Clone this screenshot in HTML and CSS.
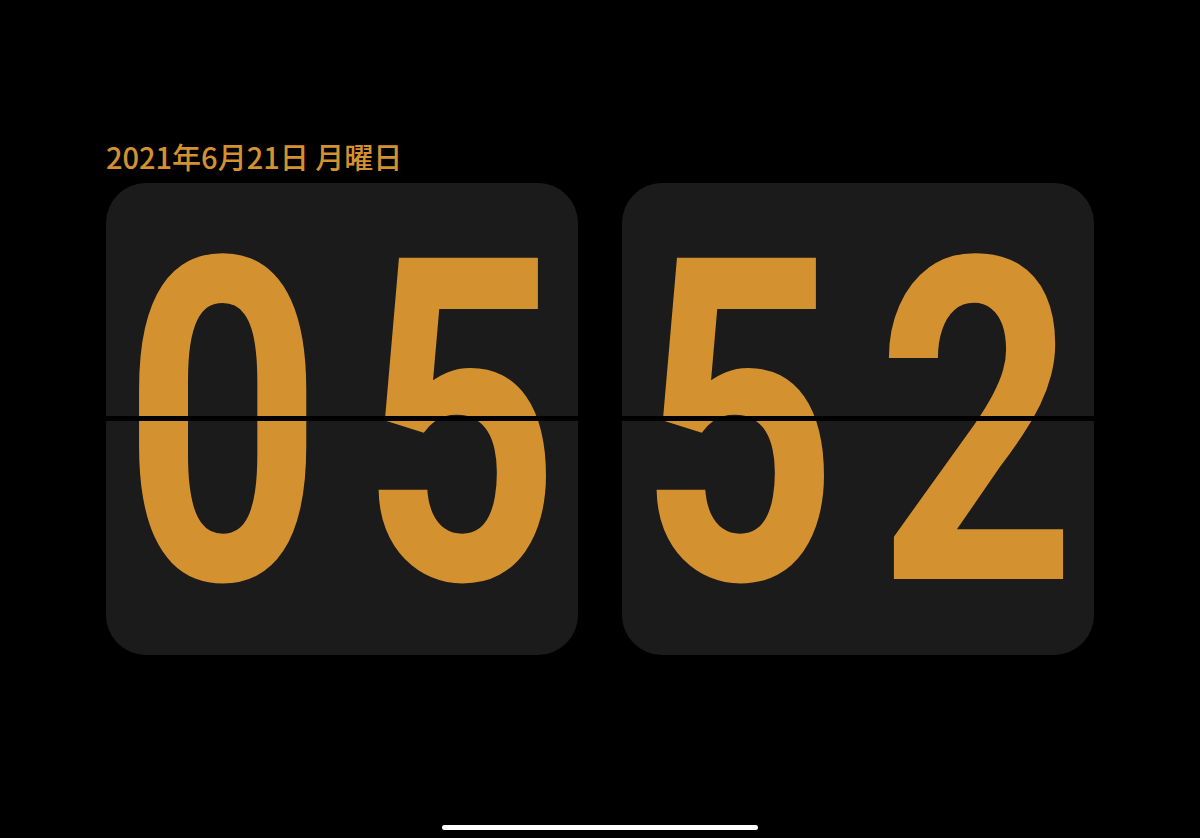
FILE: index.html
```html
<!DOCTYPE html>
<html lang="ja">
<head>
<meta charset="utf-8">
<title>Flip Clock</title>
<link rel="stylesheet" href="styles.css">
</head>
<body>
<main class="screen">
  <section class="clock">
    <div class="date">2021年6月21日 月曜日</div>
    <div class="cards">
      <div class="card">
        <div class="digit"><span>0</span></div>
        <div class="digit"><span>5</span></div>
      </div>
      <div class="card">
        <div class="digit"><span>5</span></div>
        <div class="digit"><span>2</span></div>
      </div>
    </div>
  </section>
  <div class="home-indicator"></div>
</main>
</body>
</html>
```
FILE: styles.css
```css
html, body {
  margin: 0;
  padding: 0;
  background: #000;
}

.screen {
  width: 1200px;
  height: 838px;
  display: flex;
  flex-direction: column;
  align-items: center;
  overflow: hidden;
}

.clock {
  padding-top: 138px;
  width: 988px;
  display: flex;
  flex-direction: column;
}

.date {
  font-family: "Noto Sans CJK JP", "Noto Sans", sans-serif;
  font-weight: 500;
  font-size: 29px;
  line-height: 36px;
  color: #d4912f;
  margin-bottom: 9px;
}

.cards {
  display: flex;
  gap: 44px;
}

.card {
  position: relative;
  width: 472px;
  height: 472px;
  border-radius: 40px;
  background: #1b1b1b;
  display: flex;
  justify-content: center;
  align-items: center;
  gap: 62px;
}

.card::after {
  content: "";
  position: absolute;
  left: 0;
  right: 0;
  top: 233px;
  height: 5px;
  background: #000;
}

.digit {
  width: 176px;
  height: 472px;
  display: flex;
  justify-content: center;
  align-items: center;
}

.digit span {
  display: block;
  font-family: Roboto, "DejaVu Sans", sans-serif;
  font-weight: 700;
  font-size: 452px;
  line-height: 1;
  color: #d4912f;
  transform: scaleX(0.77) translateY(6px);
}

.home-indicator {
  margin-top: auto;
  margin-bottom: 8px;
  width: 316px;
  height: 5px;
  border-radius: 3px;
  background: #fff;
}
```
